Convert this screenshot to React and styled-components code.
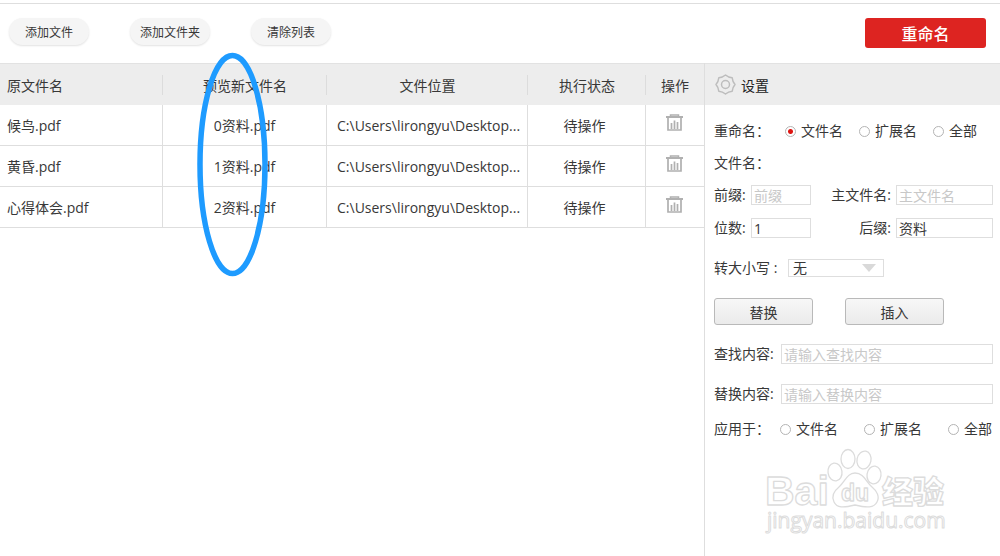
import React, { useState } from "react";
import styled, { createGlobalStyle } from "styled-components";

//style
const GlobalStyle = createGlobalStyle`
  * {
    box-sizing: border-box;
  }
  html, body, #root {
    height: 100%;
  }
  body {
    margin: 0;
    background: #fff;
  }
  body, button, input, select {
    font-family: "Open Sans", "Noto Sans CJK SC", sans-serif;
    font-size: 14px;
    color: #383838;
  }
`;

const AppWrapper = styled.div`
  display: flex;
  flex-direction: column;
  min-height: 100%;
  padding-top: 3px;
`;

const Toolbar = styled.header`
  display: flex;
  align-items: flex-start;
  gap: 41px;
  height: 60px;
  padding: 14px 14px 0 9px;
  border-top: 1px solid #dedede;
`;

const PillButton = styled.button`
  width: 80px;
  height: 27px;
  padding: 0;
  border: 0;
  border-radius: 14px;
  background: #f5f5f5;
  box-shadow: 0 1px 2px #e2e2e2;
  font-size: 12px;
`;

const RenameButton = styled.button`
  width: 121px;
  height: 30px;
  margin-left: auto;
  padding: 0;
  border: 0;
  border-radius: 3px;
  background: #dd2421;
  color: #fff;
  font-size: 16px;
  font-weight: 500;
`;

const Body = styled.div`
  display: flex;
  flex: 1;
`;

const FilePane = styled.main`
  position: relative;
  flex: 1;
  min-width: 0;
`;

const FileTable = styled.table`
  width: 100%;
  table-layout: fixed;
  border-collapse: separate;
  border-spacing: 0;
`;

const HeadCell = styled.th`
  width: ${(props) => props.$width || "auto"};
  height: 42px;
  padding: ${(props) => (props.$left ? "0 7px" : "0")};
  border-top: 1px solid #e2e2e2;
  background: #ededed;
  background-image: ${(props) =>
    props.$last ? "none" : "linear-gradient(#dcdcdc, #dcdcdc)"};
  background-position: right center;
  background-size: 1px 20px;
  background-repeat: no-repeat;
  font-weight: 400;
  text-align: ${(props) => (props.$left ? "left" : "center")};
`;

const Cell = styled.td`
  height: 41px;
  padding: ${(props) => props.$pad || "0"};
  border-right: ${(props) => (props.$last ? "0" : "1px solid #dedede")};
  border-bottom: 1px solid #dedede;
  text-align: ${(props) => props.$align || "center"};
  white-space: nowrap;
  overflow: hidden;
`;

const IconButton = styled.button`
  display: block;
  width: 17px;
  height: 18px;
  margin: 0 auto;
  padding: 0;
  border: 0;
  background: none;
`;

// hand drawn ring over the preview column
const Marker = styled.svg`
  position: absolute;
  top: -12px;
  left: 196px;
  pointer-events: none;
`;

const SettingsPane = styled.aside`
  width: 296px;
  border-left: 1px solid #dedede;
`;

const SettingsTitle = styled.h2`
  display: flex;
  align-items: center;
  gap: 5px;
  height: 42px;
  margin: 0;
  padding: 0 10px;
  border-top: 1px solid #e2e2e2;
  background: #ededed;
  color: #222;
  font-size: 14px;
  font-weight: 400;
`;

const SettingsForm = styled.form`
  display: flex;
  flex-direction: column;
  padding: 16px 7px 0 9px;
  line-height: 20px;
`;

const FormRow = styled.div`
  display: flex;
  align-items: center;
  height: 20px;
  margin-bottom: ${(props) => props.$gap || 0}px;
  white-space: nowrap;
`;

const GroupLabel = styled.span`
  width: ${(props) => props.$width || 56}px;
`;

const FieldLabel = styled.label`
  flex: ${(props) => (props.$grow ? "1" : "none")};
  width: ${(props) => (props.$width ? props.$width + "px" : "auto")};
  padding-right: 5px;
  text-align: ${(props) => (props.$grow ? "right" : "left")};
`;

const TextInput = styled.input`
  flex: ${(props) => (props.$width ? "none" : "1")};
  width: ${(props) => (props.$width ? props.$width + "px" : "auto")};
  min-width: 0;
  height: 20px;
  padding: 0 2px;
  border: 1px solid #dedede;
  border-radius: 0;
  outline: 0;
  &::placeholder {
    color: #c8c8c8;
  }
`;

const RadioLabel = styled.label`
  display: flex;
  align-items: center;
  gap: 5px;
`;

const RadioGroup = styled.div`
  display: flex;
  gap: ${(props) => props.$gap}px;
`;

const Radio = styled.input`
  appearance: none;
  width: 11px;
  height: 11px;
  margin: 0;
  border: 1px solid #b4b4b4;
  border-radius: 50%;
  background: #fff;
  &:checked {
    background: radial-gradient(circle, #dd1512 2px, #fff 3px);
  }
`;

const CaseSelect = styled.select`
  appearance: none;
  width: 96px;
  height: 18px;
  padding: 0 4px;
  border: 1px solid #dedede;
  border-radius: 0;
  background: #fff
    url("data:image/svg+xml,%3Csvg xmlns='http://www.w3.org/2000/svg' width='14' height='8'%3E%3Cpath d='M0 0h14L7 8z' fill='%23d9d9d9'/%3E%3C/svg%3E")
    no-repeat right 7px center;
  line-height: 16px;
`;

const ButtonRow = styled.div`
  display: flex;
  gap: 32px;
  margin-bottom: 19px;
`;

const GrayButton = styled.button`
  width: 99px;
  height: 27px;
  padding: 0;
  border: 1px solid #b9b9b9;
  border-radius: 3px;
  background: linear-gradient(#f7f7f7, #ebebeb);
`;

const Watermark = styled.svg`
  display: block;
  margin: 7px 0 0 49px;
`;

const TrashIcon = () => (
  <svg width="17" height="18" viewBox="0 0 17 18" fill="none" stroke="#b0b0b0">
    <path d="M4.5 2.2V1h8v1.2" strokeWidth="1.5" />
    <path d="M0 3h17" strokeWidth="2" />
    <path d="M2 3v13h13V3" strokeWidth="1.7" />
    <path d="M5.5 9v6M8.5 6.5V15M11.5 8v7" strokeWidth="1.7" />
  </svg>
);

const GearIcon = () => (
  <svg width="21" height="21" viewBox="-10.5 -10.5 21 21" fill="none" stroke="#bdbdbd" strokeWidth="1.5">
    <path
      d="M0-9.5Q2.9-7 6.7-6.7Q7-2.9 9.5 0Q7 2.9 6.7 6.7Q2.9 7 0 9.5Q-2.9 7-6.7 6.7Q-7 2.9-9.5 0Q-7-2.9-6.7-6.7Q-2.9-7 0-9.5Z"
      strokeLinejoin="round"
    />
    <circle r="4" />
  </svg>
);

const Logo = () => (
  <Watermark width="190" height="92" viewBox="0 0 190 92" fill="#fff" stroke="#dcdcdc" strokeWidth="1.3" strokeLinejoin="round">
    <g fontFamily="Liberation Sans, sans-serif" fontWeight="700">
      <text x="2" y="59" fontSize="41">Bai</text>
      <ellipse cx="72" cy="26" rx="7" ry="9" transform="rotate(-8 72 26)" />
      <ellipse cx="85" cy="13" rx="7" ry="9.5" />
      <ellipse cx="101" cy="14" rx="7" ry="9" transform="rotate(12 101 14)" />
      <ellipse cx="111" cy="29" rx="7" ry="9" transform="rotate(8 111 29)" />
      <path d="M92 27C101 27 103 36 109 41C114 45 117 51 114 56C111 62 104 62 92 59C80 62 74 62 71 56C68 50 71 45 76 41C82 36 84 27 92 27Z" />
      <text x="78" y="55" fontSize="23">du</text>
    </g>
    <text x="119" y="57" fontSize="31" fontWeight="900" fontFamily="Noto Sans CJK SC, sans-serif">经验</text>
    <text x="4" y="82" fontSize="21" strokeWidth="1" fontFamily="Open Sans, sans-serif">jingyan.baidu.com</text>
  </Watermark>
);

const scopes = ["文件名", "扩展名", "全部"];
const path = "C:\\Users\\lirongyu\\Desktop...";
const initialFiles = ["候鸟.pdf", "黄昏.pdf", "心得体会.pdf"];

const ScopeRadios = ({ name, value, onChange, gap }) => (
  <RadioGroup $gap={gap}>
    {scopes.map((scope) => (
      <RadioLabel key={scope}>
        <Radio
          type="radio"
          name={name}
          checked={value === scope}
          onChange={() => onChange(scope)}
        />
        {scope}
      </RadioLabel>
    ))}
  </RadioGroup>
);

const App = () => {
  const [files, setFiles] = useState(initialFiles);
  const [target, setTarget] = useState("文件名");
  const [applyTo, setApplyTo] = useState("");
  const [start, setStart] = useState("1");
  const [suffix, setSuffix] = useState("资料");

  return (
    <AppWrapper>
      <GlobalStyle />
      <Toolbar>
        <PillButton>添加文件</PillButton>
        <PillButton>添加文件夹</PillButton>
        <PillButton onClick={() => setFiles([])}>清除列表</PillButton>
        <RenameButton>重命名</RenameButton>
      </Toolbar>
      <Body>
        <FilePane>
          <FileTable>
            <thead>
              <tr>
                <HeadCell $left>原文件名</HeadCell>
                <HeadCell $width="164px">预览新文件名</HeadCell>
                <HeadCell $width="201px">文件位置</HeadCell>
                <HeadCell $width="118px">执行状态</HeadCell>
                <HeadCell $width="58px" $last>操作</HeadCell>
              </tr>
            </thead>
            <tbody>
              {files.map((file, i) => (
                <tr key={file}>
                  <Cell $align="left" $pad="0 7px">{file}</Cell>
                  <Cell>{i}资料.pdf</Cell>
                  <Cell $align="left" $pad="0 0 0 10px">{path}</Cell>
                  <Cell $pad="0 4px 0 0">待操作</Cell>
                  <Cell $last $pad="0 2px 4px 0">
                    <IconButton
                      aria-label="删除"
                      onClick={() => setFiles(files.filter((f) => f !== file))}
                    >
                      <TrashIcon />
                    </IconButton>
                  </Cell>
                </tr>
              ))}
            </tbody>
          </FileTable>
          <Marker width="74" height="226" viewBox="0 0 74 226">
            <ellipse cx="36.5" cy="113.5" rx="32.5" ry="109" fill="none" stroke="#1e9bff" strokeWidth="5.5" />
          </Marker>
        </FilePane>
        <SettingsPane>
          <SettingsTitle>
            <GearIcon />
            设置
          </SettingsTitle>
          <SettingsForm onSubmit={(e) => e.preventDefault()}>
            <FormRow $gap={12}>
              <GroupLabel $width={71}>重命名：</GroupLabel>
              <ScopeRadios name="target" value={target} onChange={setTarget} gap={16} />
            </FormRow>
            <FormRow $gap={12}>
              <GroupLabel>文件名：</GroupLabel>
            </FormRow>
            <FormRow $gap={13}>
              <FieldLabel htmlFor="prefix" $width={37}>前缀:</FieldLabel>
              <TextInput id="prefix" $width={60} placeholder="前缀" />
              <FieldLabel htmlFor="main" $grow>主文件名:</FieldLabel>
              <TextInput id="main" $width={97} placeholder="主文件名" />
            </FormRow>
            <FormRow $gap={20}>
              <FieldLabel htmlFor="digits" $width={37}>位数:</FieldLabel>
              <TextInput id="digits" $width={60} value={start} onChange={(e) => setStart(e.target.value)} />
              <FieldLabel htmlFor="suffix" $grow>后缀:</FieldLabel>
              <TextInput id="suffix" $width={97} value={suffix} onChange={(e) => setSuffix(e.target.value)} />
            </FormRow>
            <FormRow $gap={20}>
              <FieldLabel htmlFor="case" $width={74}>转大小写 :</FieldLabel>
              <CaseSelect id="case">
                <option>无</option>
              </CaseSelect>
            </FormRow>
            <ButtonRow>
              <GrayButton type="button">替换</GrayButton>
              <GrayButton type="button">插入</GrayButton>
            </ButtonRow>
            <FormRow $gap={20}>
              <FieldLabel htmlFor="find" $width={67}>查找内容:</FieldLabel>
              <TextInput id="find" placeholder="请输入查找内容" />
            </FormRow>
            <FormRow $gap={15}>
              <FieldLabel htmlFor="replace" $width={67}>替换内容:</FieldLabel>
              <TextInput id="replace" placeholder="请输入替换内容" />
            </FormRow>
            <FormRow>
              <GroupLabel $width={66}>应用于：</GroupLabel>
              <ScopeRadios name="apply" value={applyTo} onChange={setApplyTo} gap={26} />
            </FormRow>
            <Logo />
          </SettingsForm>
        </SettingsPane>
      </Body>
    </AppWrapper>
  );
};

export default App;
